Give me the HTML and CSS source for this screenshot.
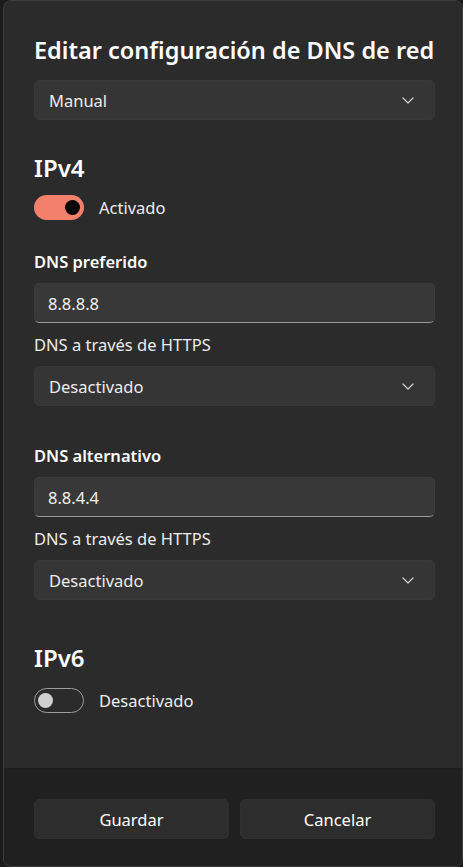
FILE: index.html
```html
<!DOCTYPE html>
<html lang="es">
<head>
<meta charset="utf-8">
<title>Editar configuración de DNS de red</title>
<link rel="stylesheet" href="styles.css">
</head>
<body>
<div class="screen">
  <div class="behind"></div>
  <div class="dialog">
    <div class="content">
      <h1 class="title">Editar configuración de DNS de red</h1>
      <div class="select mode">
        <span>Manual</span>
        <svg class="chev" width="12" height="7" viewBox="0 0 12 7"><path d="M1 1 L6 6 L11 1" fill="none" stroke="#cfcfcf" stroke-width="1.2" stroke-linecap="round" stroke-linejoin="round"/></svg>
      </div>

      <h2 class="section">IPv4</h2>
      <div class="toggle-row">
        <div class="toggle on"><div class="knob"></div></div>
        <span>Activado</span>
      </div>

      <div class="label strong first">DNS preferido</div>
      <div class="input">8.8.8.8</div>
      <div class="label">DNS a través de HTTPS</div>
      <div class="select">
        <span>Desactivado</span>
        <svg class="chev" width="12" height="7" viewBox="0 0 12 7"><path d="M1 1 L6 6 L11 1" fill="none" stroke="#cfcfcf" stroke-width="1.2" stroke-linecap="round" stroke-linejoin="round"/></svg>
      </div>

      <div class="label strong second">DNS alternativo</div>
      <div class="input">8.8.4.4</div>
      <div class="label">DNS a través de HTTPS</div>
      <div class="select">
        <span>Desactivado</span>
        <svg class="chev" width="12" height="7" viewBox="0 0 12 7"><path d="M1 1 L6 6 L11 1" fill="none" stroke="#cfcfcf" stroke-width="1.2" stroke-linecap="round" stroke-linejoin="round"/></svg>
      </div>

      <h2 class="section v6">IPv6</h2>
      <div class="toggle-row v6">
        <div class="toggle off"><div class="knob"></div></div>
        <span>Desactivado</span>
      </div>
    </div>
    <div class="footer">
      <button class="btn">Guardar</button>
      <button class="btn">Cancelar</button>
    </div>
  </div>
</div>
</body>
</html>
```
FILE: styles.css
```css
html, body {
  margin: 0;
  padding: 0;
  background: #1b1a1a;
}
.screen {
  display: flex;
  width: 463px;
  height: 867px;
  overflow: hidden;
  font-family: "Noto Sans", "Open Sans", sans-serif;
  color: #ffffff;
}
.behind {
  width: 3px;
  flex: none;
  background: #1c1a1a;
}
.dialog {
  width: 460px;
  height: 867px;
  flex: none;
  box-sizing: border-box;
  border: 1px solid #3c3c3c;
  border-radius: 8px;
  overflow: hidden;
  display: flex;
  flex-direction: column;
  background: #2b2b2b;
}
.content {
  flex: 1;
  padding: 33px 27px 0 30px;
  display: flex;
  flex-direction: column;
}
.title {
  margin: 0;
  font-size: 23.5px;
  line-height: 32px;
  font-weight: 600;
  color: #ffffff;
  white-space: nowrap;
}
.select {
  height: 40px;
  box-sizing: border-box;
  background: #353535;
  border-radius: 5px;
  border: 1px solid #383838;
  display: flex;
  align-items: center;
  justify-content: space-between;
  padding: 0 20px 0 14px;
  font-size: 16.5px;
  color: #ececec;
}
.select.mode {
  margin-top: 14px;
}
.chev {
  display: block;
}
.section {
  margin: 32px 0 0 0;
  font-size: 24px;
  line-height: 32px;
  font-weight: 600;
  color: #ffffff;
}
.section.v6 {
  margin-top: 42px;
}
.toggle-row {
  margin-top: 11px;
  display: flex;
  align-items: center;
  gap: 15px;
  font-size: 16.5px;
  color: #ececec;
}
.toggle-row.v6 {
  margin-top: 14px;
}
.toggle {
  width: 50px;
  height: 25px;
  box-sizing: border-box;
  border-radius: 13px;
  display: flex;
  align-items: center;
  padding: 0 4px;
}
.toggle .knob {
  width: 15px;
  height: 15px;
  border-radius: 50%;
}
.toggle.on {
  background: #f3806a;
  justify-content: flex-end;
}
.toggle.on .knob {
  background: #000000;
}
.toggle.off {
  border: 1px solid #9b9b9b;
  justify-content: flex-start;
  padding: 0 3px;
}
.toggle.off .knob {
  background: #d0d0d0;
}
.label {
  margin-top: 10px;
  margin-bottom: 9px;
  font-size: 16.5px;
  line-height: 24px;
  color: #ececec;
}
.label.strong {
  font-weight: 600;
  color: #ffffff;
}
.label.first {
  margin-top: 30px;
}
.label.second {
  margin-top: 38px;
}
.input {
  height: 40px;
  box-sizing: border-box;
  background: #383838;
  border: 1px solid #3c3c3c;
  border-bottom: 1px solid #9a9a9a;
  border-radius: 5px;
  display: flex;
  align-items: center;
  padding: 0 13px;
  font-size: 16.5px;
  color: #f0f0f0;
}
.footer {
  height: 98px;
  flex: none;
  box-sizing: border-box;
  background: #202020;
  border-top: 1px solid #1d1d1d;
  padding: 30px 27px 0 30px;
  display: flex;
  gap: 11px;
}
.btn {
  flex: 1;
  height: 40px;
  border: 1px solid #303030;
  border-radius: 5px;
  background: #2d2d2d;
  color: #ffffff;
  font-family: "Noto Sans", "Open Sans", sans-serif;
  font-size: 16.5px;
}
```
